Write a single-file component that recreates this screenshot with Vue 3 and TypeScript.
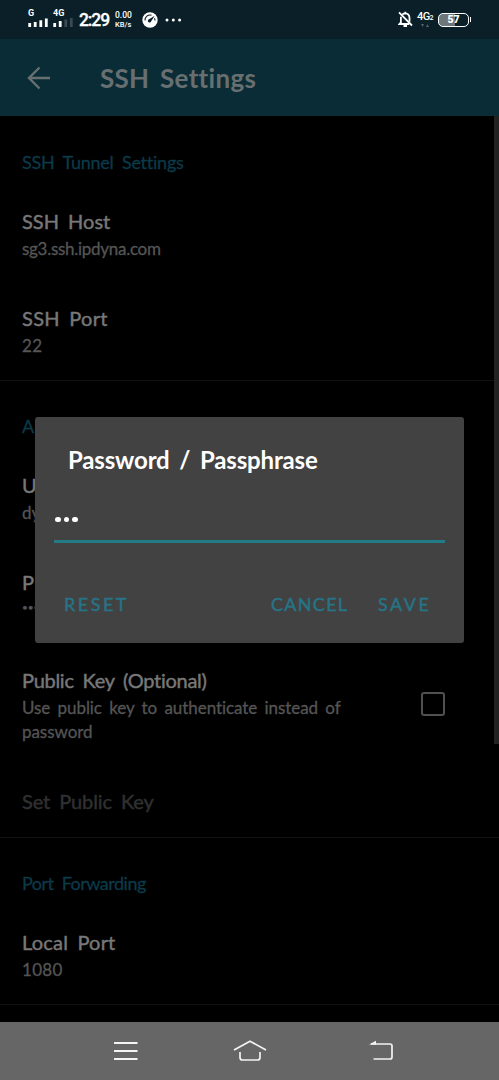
<script setup lang="ts">
interface Preference {
  id: string
  title: string
  lines?: string[]
  checkbox?: boolean
  disabled?: boolean
}

interface Section {
  id: string
  label: string
  items: Preference[]
}

const sections: Section[] = [
  {
    id: 'tunnel',
    label: 'SSH Tunnel Settings',
    items: [
      { id: 'host', title: 'SSH Host', lines: ['sg3.ssh.ipdyna.com'] },
      { id: 'port', title: 'SSH Port', lines: ['22'] },
    ],
  },
  {
    id: 'auth',
    label: 'A',
    items: [
      { id: 'user', title: 'U', lines: ['dy'] },
      { id: 'pass', title: 'P', lines: ['•••'] },
      {
        id: 'key',
        title: 'Public Key (Optional)',
        lines: ['Use public key to authenticate instead of', 'password'],
        checkbox: true,
      },
      { id: 'setkey', title: 'Set Public Key', disabled: true },
    ],
  },
  {
    id: 'forward',
    label: 'Port Forwarding',
    items: [{ id: 'local', title: 'Local Port', lines: ['1080'] }],
  },
]
</script>

<template>
  <div class="screen">
    <header class="status">
      <div class="signal">
        <span class="net">G</span>
        <svg width="20" height="10" viewBox="0 0 20 10"><path d="M1.7 9V5M7.2 9V4M12.8 9V2.2M18.3 9V0.5" stroke="#fff" stroke-width="2.8" /></svg>
      </div>
      <div class="signal second">
        <span class="net">4G</span>
        <svg width="20" height="10" viewBox="0 0 20 10"><path d="M1.7 9V5M7.2 9V3" stroke="#fff" stroke-width="2.8" /><path d="M12.8 9V1.5M18.3 9V0" stroke="#3b4a52" stroke-width="2.8" /></svg>
      </div>
      <span class="clock">2:29</span>
      <span class="speed"><span>0.00</span><span>KB/s</span></span>
      <svg class="gauge" width="16" height="16" viewBox="0 0 16 16">
        <circle cx="8" cy="8" r="7.7" fill="#fff" />
        <path d="M3 8.5A5 5 0 0 1 9.5 3.3M12.5 6.2A5 5 0 0 1 13 8.5" fill="none" stroke="#0a1f28" stroke-width="1.1" />
        <path d="M12.7 3.8L9.2 9.2A1.7 1.7 0 1 1 7 7.2Z" fill="#0a1f28" />
      </svg>
      <svg class="more" width="17" height="4" viewBox="0 0 17 4"><circle cx="2" cy="2" r="1.5" fill="#fff" /><circle cx="8.3" cy="2" r="1.5" fill="#fff" /><circle cx="14.6" cy="2" r="1.5" fill="#fff" /></svg>
      <svg class="bell" width="15" height="17" viewBox="0 0 15 17" fill="none" stroke="#fff" stroke-width="1.8">
        <path d="M4.3 3.6Q5.5 2.4 7.3 2.4Q11.4 2.6 11.5 7V10.8M2.9 5.8V11.4L1.6 13H11.2M7.3 2.4V0.8M5.5 15H9" />
        <path d="M1 1.3L14 14.5" />
      </svg>
      <span class="lte"><span>4G<small>2</small></span><svg width="8" height="3" viewBox="0 0 8 3"><path d="M0 0H3L1.5 3ZM5 3H8L6.5 0Z" fill="#53636a" /></svg></span>
      <span class="battery"><b>57</b></span>
    </header>

    <div class="appbar">
      <svg width="24" height="24" viewBox="0 0 24 24" fill="none" stroke="#686f71" stroke-width="2.4"><path d="M23 12H2M12.5 1.5L2 12L12.5 22.5" /></svg>
      <h1>SSH Settings</h1>
    </div>

    <main class="content">
      <section v-for="section in sections" :key="section.id" class="section">
        <h2 :class="section.id">{{ section.label }}</h2>
        <div v-for="item in section.items" :key="item.id" class="row" :class="[item.id, { disabled: item.disabled }]">
          <div class="texts">
            <div class="title">{{ item.title }}</div>
            <div v-for="line in item.lines" :key="line" class="sub">{{ line }}</div>
          </div>
          <span v-if="item.checkbox" class="checkbox"></span>
        </div>
      </section>
      <div class="scrollbar"></div>
    </main>

    <nav class="nav">
      <svg width="24" height="20" viewBox="0 0 24 20"><path d="M0 2H23.5M0 10H23.5M0 18H23.5" stroke="#f4f4f4" stroke-width="1.8" /></svg>
      <svg width="34" height="22" viewBox="0 0 34 22" fill="none" stroke="#f4f4f4" stroke-width="1.7" stroke-linejoin="round"><path d="M1 10L17 1.2L33 10M7 12V17.5Q7 20 9.5 20H24.5Q27 20 27 17.5V12" /></svg>
      <svg width="25" height="22" viewBox="0 0 25 22" fill="none" stroke="#f4f4f4" stroke-width="1.7"><path d="M2 4H21Q23 4 23 6V17Q23 19 21 19H4.5" /><path d="M0 4.4L7 0.8V4.4Z" fill="#f4f4f4" stroke="none" /></svg>
    </nav>

    <div class="dialog" role="dialog">
      <h3>Password / Passphrase</h3>
      <div class="field"><i></i><i></i><i></i></div>
      <div class="actions">
        <span class="reset">RESET</span>
        <span class="cancel">CANCEL</span>
        <span class="save">SAVE</span>
      </div>
    </div>
  </div>
</template>

<style>
body {
  background: #000;
}
</style>

<style scoped>
.screen {
  position: relative;
  width: 499px;
  height: 1080px;
  overflow: hidden;
  background: #000;
  font-family: Lato, "Open Sans", sans-serif;
  font-variant-ligatures: none;
  display: flex;
  flex-direction: column;
}
.status {
  height: 39px;
  flex: none;
  box-sizing: border-box;
  background: #0a1f28;
  color: #fff;
  display: flex;
  align-items: center;
  padding-left: 28px;
}
.signal {
  width: 20px;
  display: flex;
  flex-direction: column;
  margin-top: -3px;
}
.signal.second { margin-left: 5px; }
.net { font: 700 9px/9px Roboto, sans-serif; }
.clock { font: 500 17.5px/20px Roboto, sans-serif; margin-left: 6px; width: 32px; letter-spacing: -1.1px; -webkit-text-stroke: 0.3px #fff; }
.speed { display: flex; flex-direction: column; width: 18px; margin-left: 4px; font: 500 8.5px/10px Roboto, sans-serif; white-space: nowrap; }
.speed span:last-child { font-size: 7.5px; }
.gauge { margin-left: 9px; }
.more { margin-left: 7px; }
.bell { margin-left: 216px; flex: none; }
.lte { width: 18px; margin-left: 4px; display: flex; flex-direction: column; font: 500 11px/12px Roboto, sans-serif; letter-spacing: -0.6px; white-space: nowrap; }
.lte small { font-size: 7px; }
.lte svg { margin: 0 0 1px 4px; }
.battery {
  position: relative;
  width: 31px;
  height: 14px;
  box-sizing: border-box;
  margin-left: 3px;
  border: 1.5px solid #fff;
  border-radius: 5px;
  background: linear-gradient(90deg, #6d777b 55%, transparent 55%);
  font: 700 10.5px/12px Roboto, sans-serif;
  text-align: center;
}
.battery::after { content: ""; position: absolute; right: -3px; top: 3px; width: 1.5px; height: 5px; background: #fff; }
.appbar {
  height: 77px;
  flex: none;
  background: #0a2c36;
  display: flex;
  align-items: center;
  padding-left: 27px;
}
.appbar h1 {
  margin: 0 0 0 49px;
  font-size: 26px;
  line-height: 32px;
  font-weight: 700;
  color: #686f71;
  word-spacing: 4px;
  letter-spacing: 0.3px;
}
.content {
  position: relative;
  height: 906px;
  flex: none;
}
.section + .section { border-top: 1px solid #111; }
.section:nth-of-type(3) { border-bottom: 1px solid #111; }
h2 {
  height: 37px;
  padding: 33px 0 0 22px;
  margin: 0;
  font-size: 18px;
  line-height: 24px;
  font-weight: 400;
  color: #0b3a49;
  word-spacing: 4px;
  letter-spacing: -0.5px;
  -webkit-text-stroke: 0.3px currentColor;
}
h2.tunnel { height: 37px; padding-top: 34px; letter-spacing: -0.24px; }
.row {
  height: 97px;
  box-sizing: border-box;
  padding: 21px 54px 0 22px;
  display: flex;
  justify-content: space-between;
  color: #787878;
}
.row.port, .row.local { height: 96px; }
.row.key { height: 122px; padding-top: 22px; }
.row.setkey { height: 70px; }
.title { font-size: 20px; line-height: 26px; white-space: nowrap; word-spacing: 4px; -webkit-text-stroke: 0.45px currentColor; }
.sub { font-size: 17px; line-height: 24px; color: #555; white-space: nowrap; word-spacing: 3px; position: relative; top: 3px; -webkit-text-stroke: 0.3px currentColor; }
.port .title { letter-spacing: 0.3px; }
.local .title { letter-spacing: 0.2px; }
.key .title { letter-spacing: -0.28px; }
.setkey .title { letter-spacing: -0.1px; }
.host .sub { letter-spacing: -0.28px; }
.key .sub { letter-spacing: -0.06px; }
.port .sub, .local .sub { letter-spacing: 0.3px; }
.pass .sub { font-size: 10px; line-height: 18px; }
.disabled { color: #303030; }
.checkbox { width: 20px; height: 20px; margin-top: 25px; border: 2.5px solid #505050; border-radius: 3px; }
.scrollbar { position: absolute; right: 0; top: 0; width: 5px; height: 628px; background: #222; }
.nav {
  height: 58px;
  flex: none;
  background: #666;
  display: flex;
  align-items: center;
  padding-left: 114px;
}
.nav svg:nth-child(2) { margin-left: 95px; }
.nav svg:nth-child(3) { margin-left: 102px; }
.dialog {
  position: absolute;
  left: 35px;
  top: 417px;
  width: 429px;
  height: 226px;
  box-sizing: border-box;
  background: #424242;
  border-radius: 3px;
  padding: 27px 19px 0;
}
.dialog h3 { margin: 0 0 0 14px; font-size: 24px; line-height: 32px; font-weight: 700; color: #fff; white-space: nowrap; word-spacing: 4px; letter-spacing: -0.16px; }
.field { height: 64px; border-bottom: 3px solid #237c85; display: flex; gap: 3px; padding-left: 1px; align-items: flex-end; }
.field i { width: 5.5px; height: 5.5px; border-radius: 50%; background: #fff; margin-bottom: 18px; }
.actions { display: flex; padding: 49px 0 0 10px; font-size: 18px; line-height: 24px; color: #267487; -webkit-text-stroke: 0.45px currentColor; }
.reset { width: 207px; letter-spacing: 2.5px; }
.cancel { width: 107px; letter-spacing: 1.3px; }
.save { letter-spacing: 2.5px; }
</style>
